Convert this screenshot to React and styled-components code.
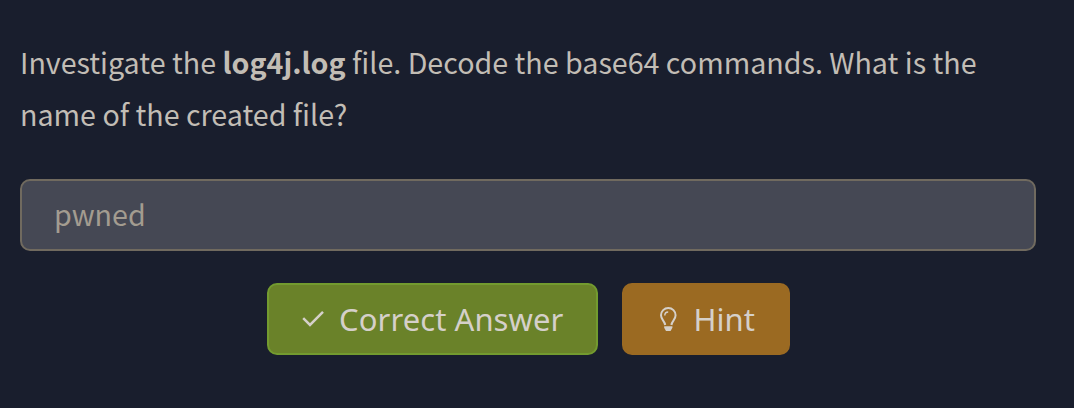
import React from "react";
import styled, { createGlobalStyle } from "styled-components";

const GlobalStyle = createGlobalStyle`
  * { box-sizing: border-box; }
  body { margin: 0; background: #191e2d; }
`;

const Panel = styled.main`
  min-height: 408px;
  padding: 36px 38px 0 20px;
  background: #191e2d;
  font-family: "Noto Sans CJK SC", "Noto Sans", sans-serif;
`;

const Question = styled.p`
  margin: 0;
  color: #c2bdb5;
  font-size: 28.65px;
  line-height: 52px;

  strong {
    font-weight: 700;
    letter-spacing: 0.02px;
  }
`;

const AnswerInput = styled.input`
  display: block;
  width: 100%;
  height: 72px;
  margin-top: 39px;
  padding: 0 32px 4px;
  border: 2px solid #706a5f;
  border-radius: 10px;
  background: #454854;
  color: #a39c90;
  font-family: inherit;
  font-size: 28.65px;
  outline: none;
`;

const Actions = styled.div`
  display: flex;
  justify-content: center;
  gap: 24px;
  margin-top: 32px;
`;

const Button = styled.button`
  display: flex;
  align-items: center;
  width: ${(p) => p.$width}px;
  height: 72px;
  padding: 0 0 0 32px;
  border: 2px solid ${(p) => p.$border};
  border-radius: 10px;
  background: ${(p) => p.$fill};
  color: #d5d0ca;
  font-family: "Noto Sans", sans-serif;
  font-size: 31px;
  letter-spacing: 0.06px;
  white-space: nowrap;
`;

const Icon = styled.svg`
  flex: none;
  margin-right: ${(p) => p.$gap}px;
`;

export default function App() {
  return (
    <Panel>
      <GlobalStyle />
      <Question>
        Investigate the <strong>log4j.log</strong> file. Decode the base64 commands. What is the
        <br />
        name of the created file?
      </Question>
      <AnswerInput defaultValue="pwned" readOnly aria-label="Answer" />
      <Actions>
        <Button $width={331} $fill="#6a8229" $border="#739b2f">
          <Icon $gap={14.6} width="24" height="24" viewBox="0 0 24 24" fill="none" stroke="currentColor" strokeWidth="2.5">
            <path d="M2.2 11.2 9 17.9 22 4.9" />
          </Icon>
          Correct Answer
        </Button>
        <Button $width={168} $fill="#9b6a22" $border="#9b6a22">
          <Icon $gap={14} width="24" height="28" viewBox="0 0 24 28" fill="none" stroke="currentColor" strokeWidth="2">
            <path d="M9.2 20C8.7 16.2 5 14.6 5 10.3a7.3 7.3 0 0 1 14.6 0C19.6 14.6 15.9 16.2 15.4 20" />
            <path d="M8.8 10.6c0-2.2 1.3-3.5 3.4-3.5" strokeWidth="1.5" />
            <path d="M8.2 21.2h8.2v1.6l-1.8 3.2h-4.6L8.2 22.8Z" fill="currentColor" stroke="none" />
          </Icon>
          Hint
        </Button>
      </Actions>
    </Panel>
  );
}
